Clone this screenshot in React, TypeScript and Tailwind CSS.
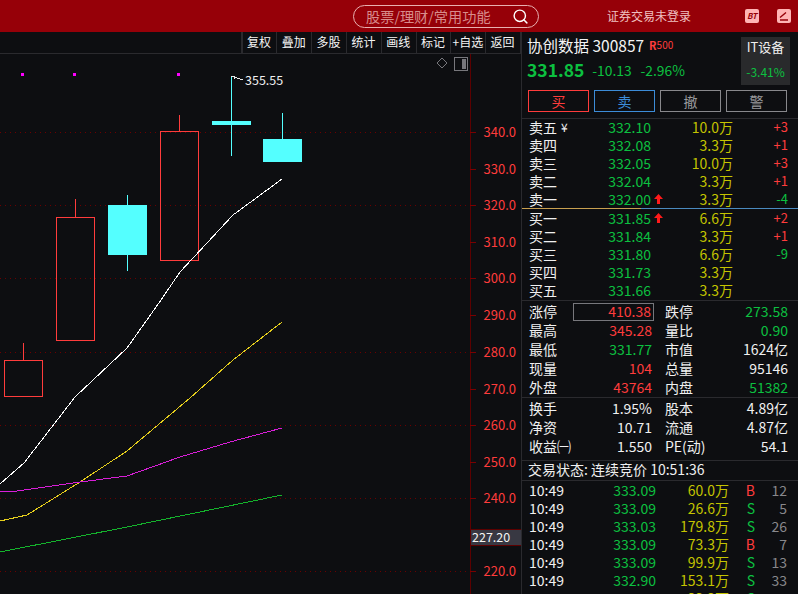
import { Search } from "lucide-react";

const TOOLS = ["复权", "叠加", "多股", "统计", "画线", "标记", "+自选", "返回"];

const AXIS = [
	[340, 132],
	[330, 169],
	[320, 205],
	[310, 242],
	[300, 278],
	[290, 315],
	[280, 352],
	[270, 389],
	[260, 425],
	[250, 462],
	[240, 498],
	[220, 571],
];
const GRID = [132, 205, 278, 352, 425, 498, 571];

const HOLLOW = [
	{ x: 4, y: 360, w: 38, h: 36, wick: [343, 360] },
	{ x: 56, y: 217, w: 38, h: 123, wick: [199, 217] },
	{ x: 160, y: 131, w: 38, h: 129, wick: [115, 131] },
];
const SOLID = [
	{ x: 108, y: 205, w: 39, h: 50, wick: [195, 271] },
	{ x: 212, y: 121, w: 39, h: 4, wick: [76, 156] },
	{ x: 263, y: 139, w: 39, h: 23, wick: [113, 139] },
];

const ASKS = [
	{ label: "卖五", price: "332.10", qty: "10.0万", delta: "+3" },
	{ label: "卖四", price: "332.08", qty: "3.3万", delta: "+1" },
	{ label: "卖三", price: "332.05", qty: "10.0万", delta: "+3" },
	{ label: "卖二", price: "332.04", qty: "3.3万", delta: "+1" },
	{ label: "卖一", price: "332.00", qty: "3.3万", delta: "-4", up: true },
];
const BIDS = [
	{ label: "买一", price: "331.85", qty: "6.6万", delta: "+2", up: true },
	{ label: "买二", price: "331.84", qty: "3.3万", delta: "+1" },
	{ label: "买三", price: "331.80", qty: "6.6万", delta: "-9" },
	{ label: "买四", price: "331.73", qty: "3.3万", delta: "" },
	{ label: "买五", price: "331.66", qty: "3.3万", delta: "" },
];

const RED = "text-[#ff3c3c]";
const GREEN = "text-[#0cc040]";
const WHITE = "text-[#f0f0f0]";

const STATS = [
	["涨停", "410.38", RED, "跌停", "273.58", GREEN],
	["最高", "345.28", RED, "量比", "0.90", GREEN],
	["最低", "331.77", GREEN, "市值", "1624亿", WHITE],
	["现量", "104", RED, "总量", "95146", WHITE],
	["外盘", "43764", RED, "内盘", "51382", GREEN],
];
const FUNDAMENTALS = [
	["换手", "1.95%", WHITE, "股本", "4.89亿", WHITE],
	["净资", "10.71", WHITE, "流通", "4.87亿", WHITE],
	["收益㈠", "1.550", WHITE, "PE(动)", "54.1", WHITE],
];

const TICKS = [
	["10:49", "333.09", "60.0万", "B", "12"],
	["10:49", "333.09", "26.6万", "S", "5"],
	["10:49", "333.03", "179.8万", "S", "26"],
	["10:49", "333.09", "73.3万", "B", "7"],
	["10:49", "333.09", "99.9万", "S", "13"],
	["10:49", "332.90", "153.1万", "S", "33"],
	["10:49", "333.09", "33.3万", "S", "17"],
];

function Chart() {
	return (
		<svg width={521} height={540} viewBox="0 54 521 540" shapeRendering="crispEdges" className="block">
			{GRID.map((y) => (
				<line key={y} x1={0} x2={470} y1={y + 0.5} y2={y + 0.5} stroke="#6a0000" strokeDasharray="1 4" />
			))}
			<line x1={470.5} x2={470.5} y1={54} y2={594} stroke="#5c0000" />
			{AXIS.map(([v, y]) => (
				<g key={v}>
					<line x1={470} x2={476} y1={y + 0.5} y2={y + 0.5} stroke="#7a0000" />
					<text x={516} y={y + 4.5} textAnchor="end" fontSize={13} shapeRendering="auto" fill="#ff3c3c">
						{v}.0
					</text>
				</g>
			))}

			<rect x={21} y={73} width={3} height={3} fill="#ff00ff" />
			<rect x={73} y={73} width={3} height={3} fill="#ff00ff" />
			<rect x={177} y={73} width={3} height={3} fill="#ff00ff" />

			<path d="M442 58l5 5-5 5-5-5z" fill="none" stroke="#77777c" shapeRendering="auto" />
			<rect x={454.5} y={57.5} width={13} height={13} fill="none" stroke="#77777c" />
			<rect x={462} y={59} width={4} height={10} fill="#77777c" />

			{HOLLOW.map((c) => (
				<g key={c.x}>
					<line x1={c.x + 19.5} x2={c.x + 19.5} y1={c.wick[0]} y2={c.wick[1]} stroke="#ff3c3c" />
					<rect x={c.x + 0.5} y={c.y + 0.5} width={c.w} height={c.h} fill="none" stroke="#ff3c3c" />
				</g>
			))}
			{SOLID.map((c) => (
				<g key={c.x}>
					<line x1={c.x + 19.5} x2={c.x + 19.5} y1={c.wick[0]} y2={c.wick[1]} stroke="#54ffff" />
					<rect x={c.x} y={c.y} width={c.w} height={c.h} fill="#54ffff" />
				</g>
			))}

			<polyline fill="none" stroke="#ffffff" points="0,484 24,463 75,397 127,348 161,300 180,272 233,215 282,179" />
			<polyline fill="none" stroke="#e6cf1c" points="0,521 27,515 80,482 127,451 190,398 233,360 282,322" />
			<polyline fill="none" stroke="#d81ed8" points="0,492 17,491 80,482 127,476 180,457 230,442 282,428" />
			<polyline fill="none" stroke="#14b42c" points="0,552 127,527 282,495" />

			<path d="M231 76h3v3M234 77l9 3" fill="none" stroke="#e8e8e8" />
			<text x={245} y={85} fontSize={12.5} shapeRendering="auto" fill="#f0f0f0">
				355.55
			</text>

			<rect x={471} y={529} width={50} height={17} fill="#383842" />
			<line x1={471} x2={521} y1={529.5} y2={529.5} stroke="#5c0000" />
			<line x1={471} x2={521} y1={545.5} y2={545.5} stroke="#5c0000" />
			<text x={472} y={541.5} fontSize={12.5} shapeRendering="auto" fill="#f4f4f4">
				227.20
			</text>
		</svg>
	);
}

function BookRow({ label, price, qty, delta, up, yen }: { label: string; price: string; qty: string; delta: string; up?: boolean; yen?: boolean }) {
	return (
		<div className="flex h-[18px] items-center pb-[2px] pl-[7px] pr-[10px] text-[14px] leading-[16px]">
			<span className="flex w-[60px] items-center gap-1 text-[#f0f0f0]">
				{label}
				{yen && <span className="text-[12px] leading-[16px]">¥</span>}
			</span>
			<span className={`w-[62px] text-right ${GREEN}`}>{price}</span>
			<span className="flex w-[82px] items-center justify-between text-[#c4c400]">
				<span className="ml-[3px] w-[9px]">
					{up && (
						<svg width={9} height={10} viewBox="0 0 9 10" className="block">
							<path d="M4.5 0L9 5H6v5H3V5H0z" fill="#ff1a1a" />
						</svg>
					)}
				</span>
				{qty}
			</span>
			<span className={`flex-1 text-right text-[13px] leading-[16px] ${delta.startsWith("-") ? GREEN : RED}`}>{delta}</span>
		</div>
	);
}

function StatRow({ row, boxed }: { row: string[]; boxed?: boolean }) {
	return (
		<div className="flex h-[19px] items-center pl-[7px] pr-[10px] text-[14px] leading-[16px] text-[#f0f0f0]">
			<span className="w-[44px] pb-[2px]">{row[0]}</span>
			<span
				className={`flex h-[18px] w-[81px] items-center justify-end pb-[2px] pr-[2px] ${row[2]} ${boxed ? "border border-[#77777c]" : ""}`}
			>
				{row[1]}
			</span>
			<span className="ml-[11px] w-[60px] pb-[2px]">{row[3]}</span>
			<span className={`flex-1 pb-[2px] text-right ${row[5]}`}>{row[4]}</span>
		</div>
	);
}

function ActionButton({ label, tone }: { label: string; tone: string }) {
	return <div className={`flex h-[22px] w-[61px] items-center justify-center border text-[14px] leading-[18px] ${tone}`}>{label}</div>;
}

export default function App() {
	return (
		<div className="flex h-[594px] w-[798px] flex-col overflow-hidden bg-[#0d0e11] font-['Noto_Sans_CJK_SC',sans-serif]">
			<header className="flex h-8 shrink-0 items-center bg-[#960008]">
				<div className="ml-[353px] flex h-[23px] w-[186px] items-center justify-between rounded-full border border-[#e8b0b0] pl-[12px] pr-[9px] text-[14.2px] leading-[20px] text-[#d88c8c]">
					<span>股票/理财/常用功能</span>
					<Search size={17} strokeWidth={2} className="text-white" />
				</div>
				<span className="ml-[68px] text-[12px] leading-[16px] text-[#f0c0c0]">证券交易未登录</span>
				<div className="ml-[54px] flex h-[14px] w-[14px] items-center justify-center rounded-[2px] bg-[#ffb4b4] text-[8px] font-bold italic leading-none text-[#960008]">
					BT
				</div>
				<div className="ml-[18px] flex h-[14px] w-[14px] items-center justify-center rounded-[2px] bg-[#ffb4b4]">
					<svg width={14} height={14} viewBox="0 0 14 14">
						<path d="M3 8.5L9 3.5M3 11h8" stroke="#960008" strokeWidth={1.4} fill="none" />
					</svg>
				</div>
			</header>

			<div className="flex min-h-0 flex-1">
				<main className="w-[521px] shrink-0">
					<div className="box-content flex h-[21px] justify-end border-b border-[#2a2a2e]">
						<div className="flex border-l-2 border-[#2a2a2e]">
							{TOOLS.map((t) => (
								<div
									key={t}
									className="flex w-[34.8px] items-center justify-center whitespace-nowrap border-r border-[#2a2a2e] pb-[2px] pr-[1px] text-[12px] leading-[16px] text-[#f4f4f4]"
								>
									{t}
								</div>
							))}
						</div>
					</div>
					<Chart />
				</main>

				<aside className="flex min-w-0 flex-1 flex-col border-l border-[#2a2a2e]">
					<div className="relative h-[86px] shrink-0 pl-[5px]">
						<div className="flex h-[26px] items-center">
							<span className="text-[15.5px] leading-[20px] text-[#f4f4f4]">协创数据 300857</span>
							<span className="ml-[5px] text-[11px] font-bold leading-[14px] text-[#ff3c3c]">R</span>
							<span className="text-[10px] leading-[14px] text-[#ff3c3c]">500</span>
						</div>
						<div className={`flex h-[24px] items-center ${GREEN}`}>
							<span className="text-[17.5px] font-bold leading-[22px]">331.85</span>
							<span className="ml-[8px] text-[13.8px] leading-[20px]">-10.13</span>
							<span className="ml-[9px] text-[13.8px] leading-[20px]">-2.96%</span>
						</div>
						<div className="absolute left-[219px] top-[5px] flex h-[48px] w-[49px] flex-col items-center gap-[8px] bg-[#292a2c] pt-[1px]">
							<span className="text-[13px] leading-[18px] text-[#f0f0f0]">IT设备</span>
							<span className={`text-[12px] leading-[16px] ${GREEN}`}>-3.41%</span>
						</div>
						<div className="mt-[8px] flex gap-[5px] pl-[1px]">
							<ActionButton label="买" tone="border-[#ff3c3c] text-[#ff3c3c]" />
							<ActionButton label="卖" tone="border-[#3c8cd8] text-[#3c8cd8]" />
							<ActionButton label="撤" tone="border-[#88888c] text-[#99999c]" />
							<ActionButton label="警" tone="border-[#88888c] text-[#99999c]" />
						</div>
					</div>

					<div className="h-px shrink-0 bg-[#2a2a2e]" />
					<div className="h-[89px] shrink-0">
						{ASKS.map((r, i) => (
							<BookRow key={r.label} {...r} yen={i === 0} />
						))}
					</div>
					<div className="flex h-px shrink-0">
						<div className="w-[119px] bg-[#c8a050]" />
						<div className="flex-1 bg-[#4a8ac0]" />
					</div>
					<div className="h-[91px] shrink-0 pt-px">
						{BIDS.map((r) => (
							<BookRow key={r.label} {...r} />
						))}
					</div>

					<div className="h-px shrink-0 bg-[#2a2a2e]" />
					<div className="h-[96px] shrink-0 pt-px">
						{STATS.map((r, i) => (
							<StatRow key={r[0]} row={r} boxed={i === 0} />
						))}
					</div>
					<div className="h-px shrink-0 bg-[#2a2a2e]" />
					<div className="h-[62px] shrink-0 pt-px">
						{FUNDAMENTALS.map((r) => (
							<StatRow key={r[0]} row={r} />
						))}
					</div>
					<div className="h-px shrink-0 bg-[#2a2a2e]" />
					<div className="flex h-[19px] shrink-0 items-center pb-[3px] pl-[6px] text-[14px] leading-[16px] text-[#f0f0f0]">
						交易状态: 连续竞价 10:51:36
					</div>
					<div className="h-px shrink-0 bg-[#2a2a2e]" />
					<div className="min-h-0 flex-1 overflow-hidden">
						{TICKS.map((t, i) => (
							<div key={i} className="flex h-[18px] items-center pl-[7px] text-[14px] leading-[18px]">
								<span className="w-[50px] text-[#f0f0f0]">{t[0]}</span>
								<span className={`w-[77px] text-right ${GREEN}`}>{t[1]}</span>
								<span className="w-[73px] text-right text-[#c4c400]">{t[2]}</span>
								<span className={`w-[26px] text-right ${t[3] === "B" ? RED : GREEN}`}>{t[3]}</span>
								<span className="w-[32px] text-right text-[#88888c]">{t[4]}</span>
							</div>
						))}
					</div>
				</aside>
			</div>
		</div>
	);
}
